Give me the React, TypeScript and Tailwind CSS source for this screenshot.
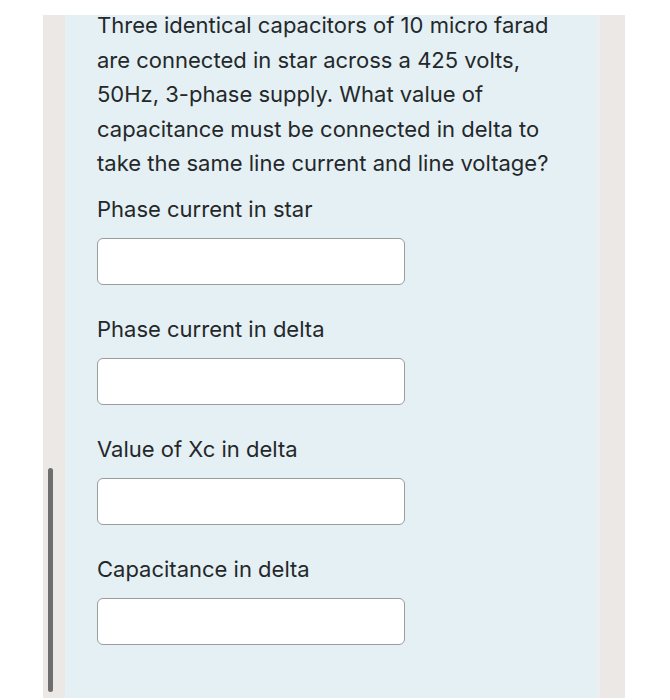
export default function App() {
  const lines = [
    "Three identical capacitors of 10 micro farad",
    "are connected in star across a 425 volts,",
    "50Hz, 3-phase supply. What value of",
    "capacitance must be connected in delta to",
    "take the same line current and line voltage?",
  ];
  const fields = [
    "Phase current in star",
    "Phase current in delta",
    "Value of Xc in delta",
    "Capacitance in delta",
  ];

  return (
    <div className="w-[670px] h-[700px] bg-white overflow-hidden font-['Inter','Liberation_Sans',Arial,sans-serif]">
      <div className="relative ml-[43px] mt-[15px] w-[582px] h-[683px] bg-[#ebe8e6] flex">
        {/* scroll bar on the left */}
        <div className="absolute left-[5px] top-[453px] w-[5px] h-[224px] rounded-full bg-[#6e6e6e]" />

        <div className="ml-[22px] w-[535px] h-full bg-[#e5f0f4] border-r-[3px] border-[#eceef4]">
          <div className="pl-[32px] -mt-[7px] text-[#24282a] text-[22px] tracking-[0px]">
            <p className="leading-[34.5px] whitespace-nowrap">
              {lines.map((l) => (
                <span key={l} className="block">{l}</span>
              ))}
            </p>

            {fields.map((label, i) => (
              <div key={label} className={i === 0 ? "mt-[11px]" : "mt-[27px]"}>
                <div className="leading-[34px]">{label}</div>
                <input
                  type="text"
                  className="mt-[12px] block w-[308px] h-[47px] bg-white border-[1.5px] border-[#9a9c9e] rounded-[6px] outline-none"
                />
              </div>
            ))}
          </div>
        </div>
      </div>
    </div>
  );
}
